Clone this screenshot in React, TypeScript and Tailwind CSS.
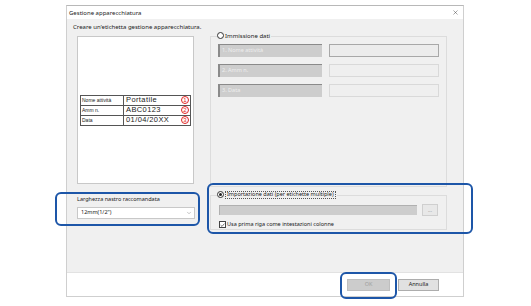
import { ChevronDown, X } from 'lucide-react';

const font = 'font-["Segoe_UI","Noto_Sans","Open_Sans",sans-serif]';

export default function App() {
  const rows = [
    { label: 'Nome attività', value: 'Portatile', n: '1' },
    { label: 'Amm n.', value: 'ABC0123', n: '2' },
    { label: 'Data', value: '01/04/20XX', n: '3' },
  ];
  const fields = ['1. Nome attività', '2. Amm n.', '3. Data'];

  return (
    <div className={`relative w-[531px] h-[306px] bg-white pl-[66px] pt-[5px] text-[#1a1a1a] ${font}`}>
      {/* Dialog */}
      <div className="w-[398px] h-[292px] border border-[#cfcfcf] border-t-[#b8b8b8] flex flex-col">
        {/* Title bar */}
        <div className="h-[13px] bg-white flex items-center justify-between pl-[2px] pr-[4px]">
          <span className="text-[6px] leading-none whitespace-nowrap">Gestione apparecchiatura</span>
          <X className="w-[7px] h-[7px] text-[#333]" strokeWidth={1.5} />
        </div>

        {/* Body */}
        <div className="flex-1 bg-[#f0f0f0] flex">
          {/* Left column */}
          <div className="w-[134px] shrink-0 pl-[6px] pt-[5px] flex flex-col">
            <div className="h-[12px] text-[6px] leading-none whitespace-nowrap">Creare un'etichetta gestione apparecchiatura.</div>
            <div className="ml-[4px] w-[117px] h-[148px] bg-white border border-[#c8c8c8] flex items-center justify-center">
              <table className="w-[111px] border-collapse border border-[#555] font-['Liberation_Sans',Arial,sans-serif]">
                <tbody>
                  {rows.map((r) => (
                    <tr key={r.label} className="h-[10px]">
                      <td className="w-[43px] border border-[#555] px-[1px] text-[5px] leading-none whitespace-nowrap">{r.label}</td>
                      <td className="border border-[#555] pl-[2px] pr-[1px] leading-none">
                        <div className="flex items-center justify-between">
                          <span className="text-[7.5px] tracking-[0.4px] text-[#222]">{r.value}</span>
                          <span className="w-[8px] h-[8px] rounded-full border border-[#e02424] text-[#e02424] text-[6px] leading-none flex items-center justify-center">{r.n}</span>
                        </div>
                      </td>
                    </tr>
                  ))}
                </tbody>
              </table>
            </div>
            <div className="ml-[4px] mt-[13px] text-[5.5px] leading-none whitespace-nowrap">Larghezza nastro raccomandata</div>
            <div className="ml-[4px] mt-[4px] w-[118px] h-[12px] bg-white border border-[#c8c8c8] flex items-center justify-between pl-[3px] pr-[2px]">
              <span className="text-[5.5px] leading-none">12mm(1/2")</span>
              <ChevronDown className="w-[6px] h-[6px] text-[#666]" strokeWidth={1.5} />
            </div>
          </div>

          {/* Right column */}
          <div className="ml-[9px] pt-[17px] flex flex-col">
            {/* Immissione dati */}
            <div className="relative w-[237px] h-[151px] border border-[#dcdcdc] pt-[7px] pl-[7px] flex flex-col gap-[7px]">
              <div className="absolute -top-[5px] left-[6px] bg-[#f0f0f0] flex items-center gap-[1px] pr-[1px]">
                <span className="w-[7px] h-[7px] rounded-full border border-[#333] bg-white" />
                <span className="text-[6px] leading-none whitespace-nowrap">Immissione dati</span>
              </div>
              {fields.map((f, i) => (
                <div key={f} className="flex gap-[7px]">
                  <div className="w-[104px] h-[13px] bg-[#cdcdcd] border-l-2 border-t border-[#8a8a8a] flex items-center pl-[2px]">
                    <span className="text-[5.5px] leading-none text-[#eeeeee] whitespace-nowrap">{f}</span>
                  </div>
                  <div className={`w-[110px] h-[13px] border ${i === 0 ? 'bg-[#ececec] border-[#a8a8a8]' : 'bg-[#efefef] border-[#d9d9d9]'}`} />
                </div>
              ))}
            </div>

            {/* Importazione dati */}
            <div className="relative mt-[8px] w-[237px] h-[35px] border border-[#dcdcdc] pt-[8px] pl-[8px] flex flex-col gap-[5px]">
              <div className="absolute -top-[5px] left-[6px] bg-[#f0f0f0] flex items-center gap-[1px] pr-[1px]">
                <span className="w-[7px] h-[7px] rounded-full border border-[#333] bg-white flex items-center justify-center">
                  <span className="w-[3px] h-[3px] rounded-full bg-[#222]" />
                </span>
                <span className="text-[5.5px] leading-none border border-dotted border-[#555] px-[1px] whitespace-nowrap">Importazione dati (per etichette multiple)</span>
              </div>
              <div className="flex gap-[5px] items-center">
                <div className="w-[198px] h-[10px] bg-[#cdcdcd] border-t border-l border-[#b0b0b0]" />
                <div className="w-[16px] h-[12px] bg-[#e8e8e8] border border-[#cfcfcf] flex items-center justify-center text-[5px] text-[#999] leading-none">...</div>
              </div>
              <div className="flex items-center gap-[1px]">
                <span className="w-[7px] h-[7px] bg-white border border-[#444] flex items-center justify-center">
                  <svg viewBox="0 0 8 8" className="w-[6px] h-[6px]">
                    <path d="M1 4.2 L3.2 6.3 L7 1.8" fill="none" stroke="#222" strokeWidth="1" />
                  </svg>
                </span>
                <span className="text-[5.5px] leading-none whitespace-nowrap">Usa prima riga come intestazioni colonne</span>
              </div>
            </div>
          </div>
        </div>

        {/* Footer */}
        <div className="h-[24px] bg-white border-t border-[#e2e2e2] flex items-center justify-end gap-[8px] pr-[24px]">
          <div className="w-[43px] h-[12px] bg-[#cccccc] border border-[#bfbfbf] flex items-center justify-center text-[5.5px] text-[#a0a0a0] leading-none">OK</div>
          <div className="w-[41px] h-[12px] bg-[#e1e1e1] border border-[#adadad] flex items-center justify-center text-[5.5px] leading-none">Annulla</div>
        </div>
      </div>

      {/* Highlight annotations */}
      <div className="absolute left-[55px] top-[192px] w-[145px] h-[34px] border-2 border-[#1d56a8] rounded-[6px]" />
      <div className="absolute left-[207px] top-[183px] w-[266px] h-[51px] border-2 border-[#1d56a8] rounded-[6px]" />
      <div className="absolute left-[340px] top-[272px] w-[57px] h-[27px] border-2 border-[#1d56a8] rounded-[6px]" />
    </div>
  );
}
